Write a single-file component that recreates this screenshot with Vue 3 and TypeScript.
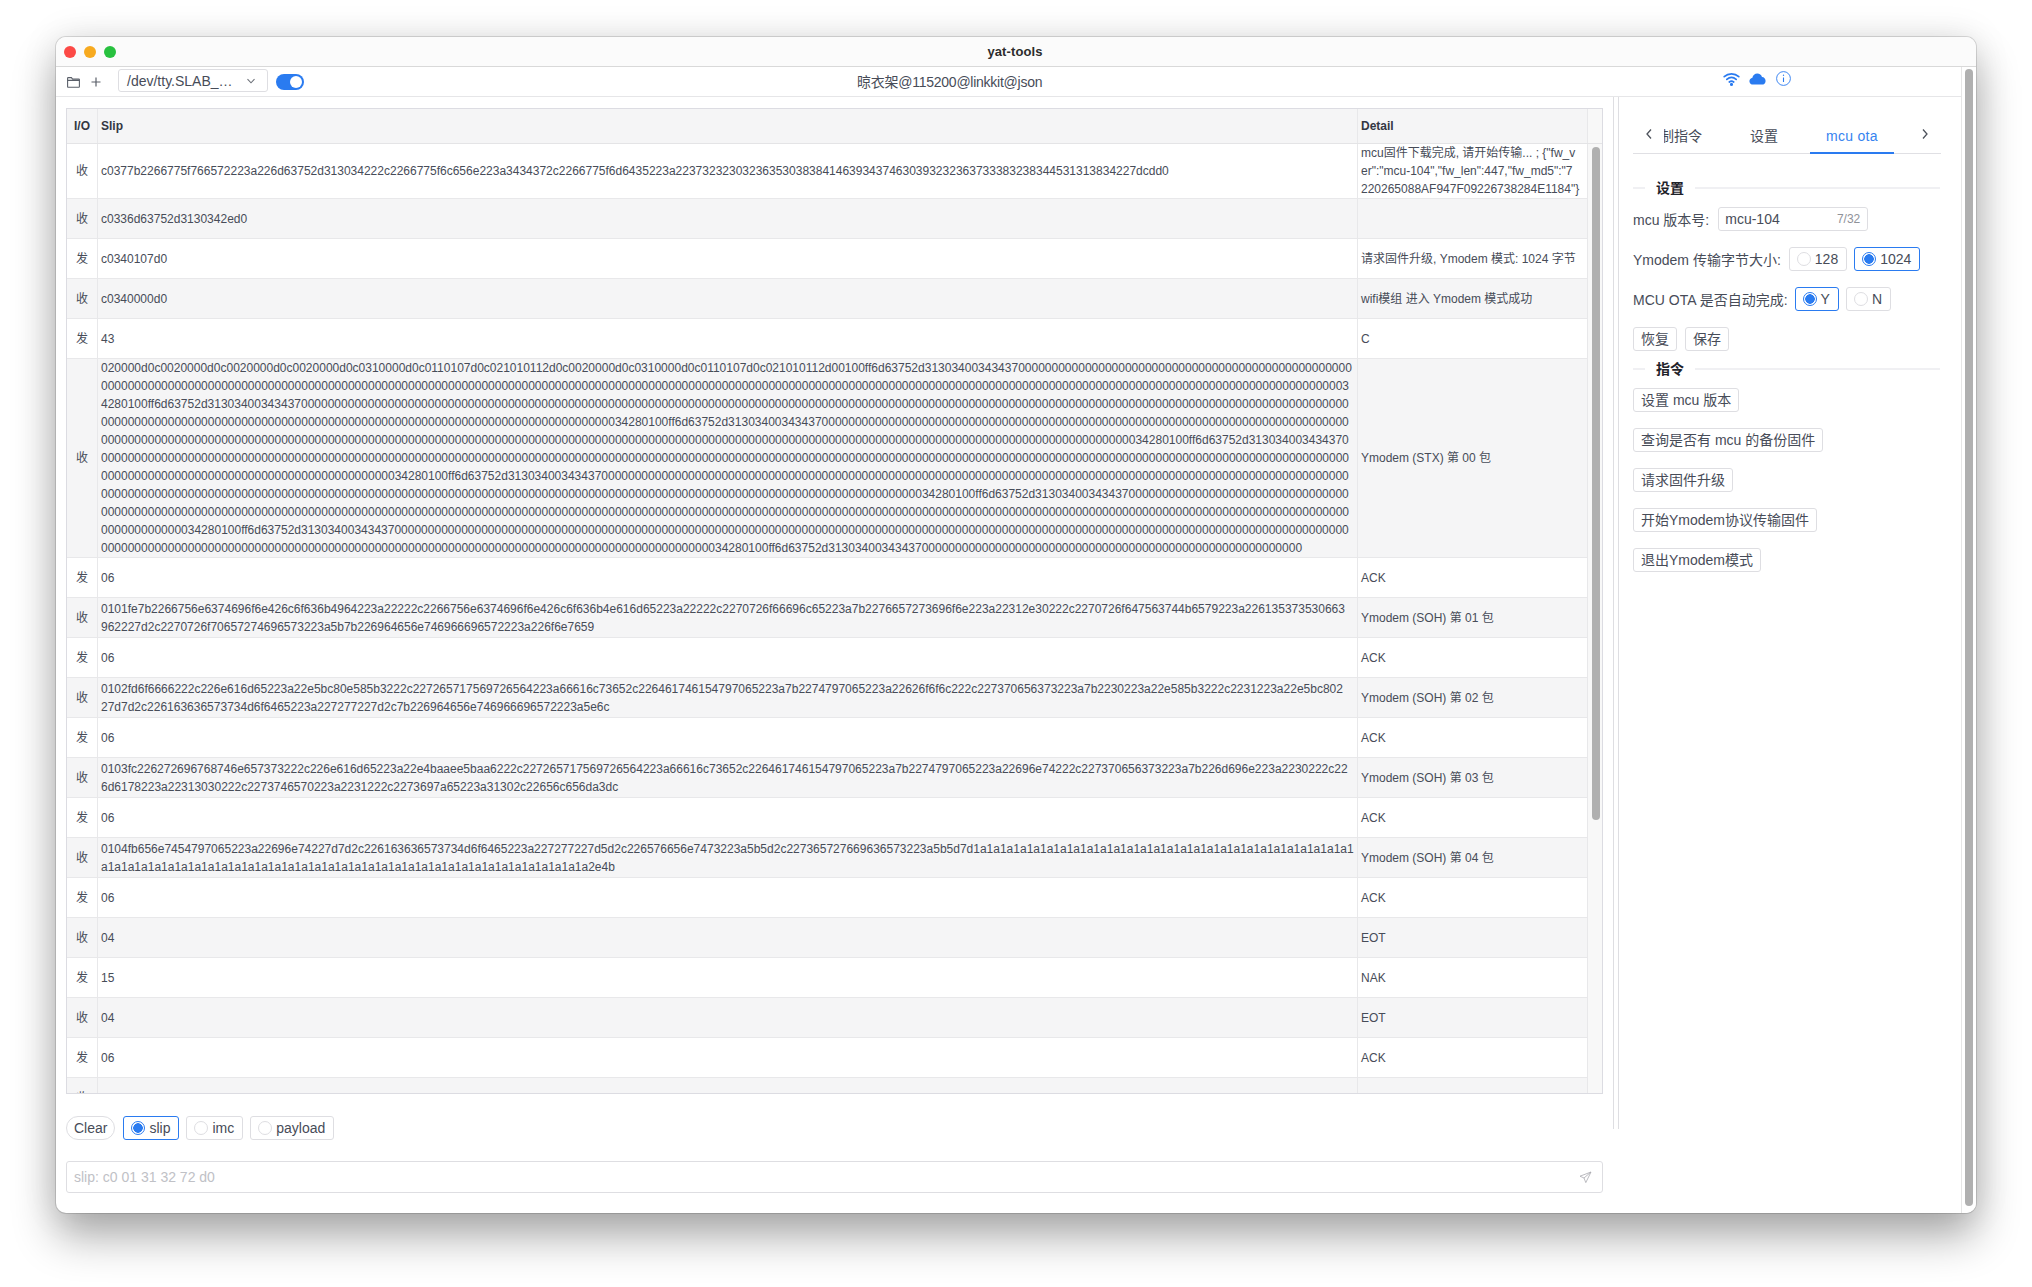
<script setup lang="ts">
interface Row { io: string; slip: string; detail: string }

const Z = (n: number): string => '0'.repeat(n)
const MARK = '34280100ff6d63752d31303400343437'
const fill = (head: string, size = 187): string => head + Z(Math.max(0, size - head.length))

const big: string = [
  fill('020000d0c0020000d0c0020000d0c0020000d0c0310000d0c0110107d0c021010112d0c0020000d0c0310000d0c0110107d0c021010112d00100ff6d63752d31303400343437', 190),
  Z(186) + '3',
  fill('4280100ff6d63752d31303400343437', 188),
  fill(Z(77) + MARK, 188),
  fill(Z(155) + MARK, 188),
  fill(''),
  fill(Z(44) + MARK, 188),
  fill(Z(123) + MARK, 188),
  fill(''),
  fill(Z(13) + MARK, 188),
  Z(92) + MARK + Z(57),
].join('\n')

const row04a: string = ('0104fb656e7454797065223a22696e74227d7d2c226163636573734d6f6465223a227277227d5d2c226576656e7473223a5b5d2c227365727669636573223a5b5d7d' + '1a'.repeat(40)).slice(0, 189)
const row04b: string = 'a1'.repeat(36) + 'a2e4b'

const ack: Row = { io: '发', slip: '06', detail: 'ACK' }

const rows: Row[] = [
  { io: '收', slip: 'c0377b2266775f766572223a226d63752d313034222c2266775f6c656e223a3434372c2266775f6d6435223a223732323032363530383841463934374630393232363733383238344531313834227dcdd0', detail: 'mcu固件下载完成, 请开始传输... ; {"fw_v\ner":"mcu-104","fw_len":447,"fw_md5":"7\n220265088AF947F09226738284E1184"}' },
  { io: '收', slip: 'c0336d63752d3130342ed0', detail: '' },
  { io: '发', slip: 'c0340107d0', detail: '请求固件升级, Ymodem 模式: 1024 字节' },
  { io: '收', slip: 'c0340000d0', detail: 'wifi模组 进入 Ymodem 模式成功' },
  { io: '发', slip: '43', detail: 'C' },
  { io: '收', slip: big, detail: 'Ymodem (STX) 第 00 包' },
  ack,
  { io: '收', slip: '0101fe7b2266756e6374696f6e426c6f636b4964223a22222c2266756e6374696f6e426c6f636b4e616d65223a22222c2270726f66696c65223a7b2276657273696f6e223a22312e30222c2270726f647563744b6579223a226135373530663\n962227d2c2270726f70657274696573223a5b7b226964656e746966696572223a226f6e7659', detail: 'Ymodem (SOH) 第 01 包' },
  ack,
  { io: '收', slip: '0102fd6f6666222c226e616d65223a22e5bc80e585b3222c227265717569726564223a66616c73652c226461746154797065223a7b2274797065223a22626f6f6c222c227370656373223a7b2230223a22e585b3222c2231223a22e5bc802\n27d7d2c226163636573734d6f6465223a227277227d2c7b226964656e746966696572223a5e6c', detail: 'Ymodem (SOH) 第 02 包' },
  ack,
  { io: '收', slip: '0103fc226272696768746e657373222c226e616d65223a22e4baaee5baa6222c227265717569726564223a66616c73652c226461746154797065223a7b2274797065223a22696e74222c227370656373223a7b226d696e223a2230222c22\n6d6178223a22313030222c2273746570223a2231222c2273697a65223a31302c22656c656da3dc', detail: 'Ymodem (SOH) 第 03 包' },
  ack,
  { io: '收', slip: row04a + '\n' + row04b, detail: 'Ymodem (SOH) 第 04 包' },
  ack,
  { io: '收', slip: '04', detail: 'EOT' },
  { io: '发', slip: '15', detail: 'NAK' },
  { io: '收', slip: '04', detail: 'EOT' },
  ack,
  { io: '收', slip: '43', detail: 'C' },
]

const tabs: string[] = ['控制指令', '设置', 'mcu ota']
const commands: string[] = ['设置 mcu 版本', '查询是否有 mcu 的备份固件', '请求固件升级', '开始Ymodem协议传输固件', '退出Ymodem模式']
const formats: { label: string; on: boolean }[] = [
  { label: 'slip', on: true },
  { label: 'imc', on: false },
  { label: 'payload', on: false },
]
const sizes: { label: string; on: boolean }[] = [
  { label: '128', on: false },
  { label: '1024', on: true },
]
const autos: { label: string; on: boolean }[] = [
  { label: 'Y', on: true },
  { label: 'N', on: false },
]
</script>

<template>
  <div class="page">
    <div class="window">
      <header class="titlebar">
        <div class="lights">
          <span class="light red"></span>
          <span class="light yellow"></span>
          <span class="light green"></span>
        </div>
        <div class="title">yat-tools</div>
      </header>

      <div class="frame">
        <div class="content">
          <div class="toolbar">
            <svg class="folder" width="13" height="11" viewBox="0 0 13 11" fill="none" stroke="#5a5f69" stroke-width="1.1">
              <path d="M.6 9.6V1.2c0-.3.2-.6.6-.6h3.2l1.2 1.5h6.2c.3 0 .6.3.6.6v6.9c0 .4-.3.7-.6.7H1.2c-.4 0-.6-.3-.6-.7z" />
              <path d="M.6 3.4h11.8" />
            </svg>
            <svg class="plus" width="10" height="10" viewBox="0 0 10 10" stroke="#5a5f69" stroke-width="1.2">
              <path d="M5 .5v9M.5 5h9" />
            </svg>
            <div class="select">
              <span>/dev/tty.SLAB_…</span>
              <svg width="10" height="10" viewBox="0 0 10 10" fill="none" stroke="#6c7078" stroke-width="1.1">
                <path d="M1.5 3.2 5 6.8l3.5-3.6" />
              </svg>
            </div>
            <div class="switch"><span class="knob"></span></div>
            <div class="conn">晾衣架@115200@linkkit@json</div>
            <div class="status">
              <svg width="17" height="14" viewBox="0 0 17 14" fill="none" stroke="#2a7bf0" stroke-width="1.7" stroke-linecap="round">
                <path d="M1.2 4.6C5.4.9 11.6.9 15.8 4.6" />
                <path d="M3.8 7.4c2.8-2.4 6.6-2.4 9.4 0" />
                <path d="M6.3 10c1.3-1 3.1-1 4.4 0" />
                <circle cx="8.5" cy="12.4" r=".7" fill="#2a7bf0" />
              </svg>
              <svg width="17" height="12" viewBox="0 0 17 12">
                <path fill="#2a7bf0" d="M4.2 11.6C2 11.6.4 10.2.4 8.2c0-1.8 1.3-3.1 3-3.4C3.8 2.4 5.8.6 8.3.6c2.3 0 4.1 1.4 4.7 3.5 2.1.1 3.6 1.8 3.6 3.8 0 2.1-1.6 3.7-3.8 3.7z" />
              </svg>
              <svg class="info" width="15" height="15" viewBox="0 0 15 15" fill="none" stroke="#2a7bf0">
                <circle cx="7.5" cy="7.5" r="6.9" stroke-width=".9" />
                <path d="M7.5 6.5v4.6" stroke-width="1.1" />
                <circle cx="7.5" cy="4.3" r=".7" fill="#2a7bf0" stroke="none" />
              </svg>
            </div>
          </div>

          <div class="panes">
            <main class="left">
              <section class="table">
                <div class="row head">
                  <div class="cell io">I/O</div>
                  <div class="cell slip">Slip</div>
                  <div class="cell detail">Detail</div>
                  <div class="gutter"></div>
                </div>
                <div class="tbody">
                  <div class="rows">
                    <div v-for="(r, i) in rows" :key="i" class="row" :class="{ alt: i % 2 === 1 }">
                      <div class="cell io">{{ r.io }}</div>
                      <div class="cell slip">{{ r.slip }}</div>
                      <div class="cell detail">{{ r.detail }}</div>
                    </div>
                  </div>
                  <div class="track"><span class="thumb"></span></div>
                </div>
              </section>

              <div class="controls">
                <button class="btn round">Clear</button>
                <div class="radios">
                  <label v-for="f in formats" :key="f.label" class="radio" :class="{ on: f.on }">
                    <span class="dot"></span>{{ f.label }}
                  </label>
                </div>
              </div>

              <div class="send">
                <span>slip: c0 01 31 32 72 d0</span>
                <svg width="13" height="13" viewBox="0 0 13 13" fill="none" stroke="#a9a9b0" stroke-width=".8" stroke-linejoin="round">
                  <path d="M12 1 1 5.2l4 1.8 1.8 4.6z" />
                  <path d="M12 1 5 7" />
                </svg>
              </div>
            </main>

            <div class="resizer"></div>

            <aside class="right">
              <div class="tabbar">
                <svg class="chev" width="8" height="12" viewBox="0 0 8 12" fill="none" stroke="#4d525b" stroke-width="1.3">
                  <path d="M6 1.5 2 6l4 4.5" />
                </svg>
                <div class="tabclip">
                  <div class="tabs">
                    <div v-for="t in tabs" :key="t" class="tab" :class="{ active: t === 'mcu ota' }">{{ t }}</div>
                  </div>
                </div>
                <svg class="chev" width="8" height="12" viewBox="0 0 8 12" fill="none" stroke="#4d525b" stroke-width="1.3">
                  <path d="m2 1.5 4 4.5-4 4.5" />
                </svg>
              </div>

              <div class="divider first"><span>设置</span></div>
              <div class="form">
                <div class="frow">
                  <span class="flabel">mcu 版本号:</span>
                  <div class="input"><span>mcu-104</span><em>7/32</em></div>
                </div>
                <div class="frow">
                  <span class="flabel">Ymodem 传输字节大小:</span>
                  <div class="radios">
                    <label v-for="s in sizes" :key="s.label" class="radio" :class="{ on: s.on }">
                      <span class="dot"></span>{{ s.label }}
                    </label>
                  </div>
                </div>
                <div class="frow tight">
                  <span class="flabel">MCU OTA 是否自动完成:</span>
                  <div class="radios">
                    <label v-for="a in autos" :key="a.label" class="radio" :class="{ on: a.on }">
                      <span class="dot"></span>{{ a.label }}
                    </label>
                  </div>
                </div>
                <div class="frow">
                  <button class="btn">恢复</button>
                  <button class="btn">保存</button>
                </div>
              </div>

              <div class="divider"><span>指令</span></div>
              <div class="commands">
                <button v-for="c in commands" :key="c" class="btn">{{ c }}</button>
              </div>
            </aside>
          </div>
        </div>

        <div class="outer-track"><span class="outer-thumb"></span></div>
      </div>
    </div>
  </div>
</template>

<style>
html, body { margin: 0; background: #fff; }
</style>

<style scoped>
.page {
  box-sizing: border-box;
  width: 2032px;
  height: 1287px;
  padding: 37px 0 0 56px;
  overflow: hidden;
}
.window {
  box-sizing: border-box;
  width: 1920px;
  height: 1176px;
  border-radius: 10px;
  background: #fff;
  overflow: hidden;
  display: flex;
  flex-direction: column;
  box-shadow: 0 0 0 1px rgba(0, 0, 0, .13), 0 24px 44px rgba(0, 0, 0, .32), 0 0 36px rgba(0, 0, 0, .1);
  font: 14px "Liberation Sans", "Noto Sans CJK SC", sans-serif;
  color: #474c58;
}
.titlebar {
  position: relative;
  flex: none;
  height: 30px;
  box-sizing: border-box;
  background: #fbfbfb;
  border-bottom: 1px solid #d9d9d9;
  display: flex;
  align-items: center;
  justify-content: center;
}
.lights { position: absolute; left: 8px; top: 9px; display: flex; gap: 8px; }
.light { width: 12px; height: 12px; border-radius: 50%; }
.red { background: #fc4a46; }
.yellow { background: #f7aa1f; }
.green { background: #28c13f; }
.title { font-size: 13px; font-weight: 700; color: #2c2c2c; letter-spacing: .1px; margin-right: 2px; }

.frame { flex: 1; min-height: 0; display: flex; }
.content { flex: 1; min-width: 0; display: flex; flex-direction: column; }

.toolbar {
  flex: none;
  height: 30px;
  box-sizing: border-box;
  border-bottom: 1px solid #e6e6e8;
  display: flex;
  align-items: center;
  padding: 0 0 2px 11px;
}
.folder { margin-top: 3px; }
.plus { margin-left: 11px; margin-top: 3px; }
.select {
  margin-left: 17px;
  width: 150px;
  height: 23px;
  box-sizing: border-box;
  border: 1px solid #dedee2;
  border-radius: 3px;
  display: flex;
  align-items: center;
  justify-content: space-between;
  padding: 0 11px 0 8px;
}
.switch {
  margin-left: 8px;
  margin-top: 3px;
  width: 28px;
  height: 16px;
  border-radius: 8px;
  background: #2a7bf0;
  display: flex;
  justify-content: flex-end;
  align-items: center;
  padding-right: 2px;
  box-sizing: border-box;
}
.knob { width: 12px; height: 12px; border-radius: 50%; background: #fff; }
.conn { margin-left: 553px; white-space: nowrap; letter-spacing: -.25px; }
.status { margin-left: auto; margin-right: 170px; display: flex; align-items: center; gap: 9px; margin-top: -4px; }
.info { margin-left: 1px; }

.panes { flex: 1; min-height: 0; display: flex; align-items: flex-start; }

.left { width: 1557px; flex: none; box-sizing: border-box; padding: 11px 10px 0; }
.table {
  box-sizing: border-box;
  height: 986px;
  border: 1px solid #dcdce2;
  overflow: hidden;
  display: flex;
  flex-direction: column;
  font-size: 12px;
  line-height: 18px;
}
.row { display: flex; min-height: 40px; box-sizing: border-box; border-bottom: 1px solid #e8e8ea; background: #fff; }
.row.alt { background: #f5f5f6; }
.row.head { height: 35px; min-height: 35px; flex: none; background: #f5f5f6; font-weight: 700; color: #333743; border-bottom: 1px solid #e4e4e6; }
.cell {
  box-sizing: border-box;
  padding: 0 3px;
  display: flex;
  align-items: center;
  border-right: 1px solid #e8e8ea;
  white-space: pre-line;
}
.io { width: 31px; justify-content: center; padding: 0; flex: none; }
.slip { width: 1260px; flex: none; }
.detail { width: 229px; flex: none; border-right: 0; word-break: break-all; }
.gutter { flex: 1; background: #f8f8f8; border-left: 1px solid #e8e8ea; }
.tbody { flex: 1; min-height: 0; display: flex; overflow: hidden; }
.rows { width: 1520px; flex: none; }
.track { flex: 1; background: #f8f8f8; border-left: 1px solid #e8e8ea; padding: 3px 0 0 4px; box-sizing: border-box; }
.thumb { display: block; width: 8px; height: 673px; background: #b0b0b0; border-radius: 4px; }

.controls { margin-top: 22px; display: flex; gap: 8px; height: 24px; }
.radios { display: flex; gap: 7px; }
.radio {
  height: 24px;
  box-sizing: border-box;
  border: 1px solid #dedee2;
  border-radius: 3px;
  display: flex;
  align-items: center;
  padding: 0 8px 0 7px;
  gap: 4px;
}
.radio.on { border-color: #2a7bf0; }
.dot { width: 14px; height: 14px; box-sizing: border-box; border-radius: 50%; border: 1px solid #dedee2; background: #fff; }
.on .dot { border-color: #2a7bf0; background: radial-gradient(circle, #2a7bf0 0 4.5px, #fff 5px); }
.btn {
  height: 24px;
  box-sizing: border-box;
  border: 1px solid #dedee2;
  border-radius: 3px;
  background: #fff;
  padding: 0 7px 2px;
  font: inherit;
  color: inherit;
  white-space: nowrap;
}
.btn.round { border-radius: 12px; padding-bottom: 0; }

.send {
  margin-top: 21px;
  height: 32px;
  box-sizing: border-box;
  border: 1px solid #dedee2;
  border-radius: 3px;
  display: flex;
  align-items: center;
  justify-content: space-between;
  padding: 0 10px 0 7px;
  color: #c0c1c6;
}

.resizer { width: 6px; height: 1032px; box-sizing: border-box; flex: none; border-left: 1px solid #dedee2; border-right: 1px solid #dedee2; }
.right { flex: 1; min-width: 0; box-sizing: border-box; padding: 23px 20px 0 14px; }
.tabbar { height: 33px; display: flex; border-bottom: 1px solid #e0e0e4; box-sizing: content-box; }
.chev { flex: none; margin-top: 8px; }
.chev:first-child { margin-left: 12px; }
.tabbar > .chev:last-child { margin-left: 16px; }
.tabclip { margin-left: 11px; width: 241px; overflow: hidden; height: 34px; }
.tabs { display: flex; gap: 16px; margin-left: -34px; }
.tab { flex: none; padding: 0 16px; height: 34px; box-sizing: border-box; line-height: 32px; white-space: nowrap; }
.tab.active { color: #3683f0; border-bottom: 2px solid #2a7bf0; letter-spacing: .3px; }

.divider { height: 20px; display: flex; align-items: center; margin-bottom: 9px; font-weight: 700; color: #1f2229; padding-right: 1px; }
.divider.first { margin-top: 24px; }
.divider::before { content: ""; width: 12px; height: 2px; background: #f0f0f3; }
.divider::after { content: ""; flex: 1; height: 2px; background: #f0f0f3; }
.divider span { padding: 0 11px 2px; }

.form { display: flex; flex-direction: column; gap: 16px; margin-bottom: 8px; }
.frow { height: 24px; display: flex; gap: 8px; align-items: center; white-space: nowrap; }
.frow.tight { gap: 7px; }
.flabel { padding-bottom: 1px; }
.input {
  width: 150px;
  height: 24px;
  box-sizing: border-box;
  border: 1px solid #dedee2;
  border-radius: 3px;
  display: flex;
  align-items: center;
  justify-content: space-between;
  padding: 0 7px 0 6px;
  margin-left: 1px;
}
.input em { font-style: normal; font-size: 12px; color: #8f9299; }
.commands { display: flex; flex-direction: column; align-items: flex-start; gap: 16px; }

.outer-track { width: 15px; flex: none; box-sizing: border-box; border-left: 1px solid #e6e6e6; padding: 2px 3px 7px; display: flex; background: #fff; }
.outer-thumb { flex: 1; background: #b0b0b0; border-radius: 4px; }
</style>
